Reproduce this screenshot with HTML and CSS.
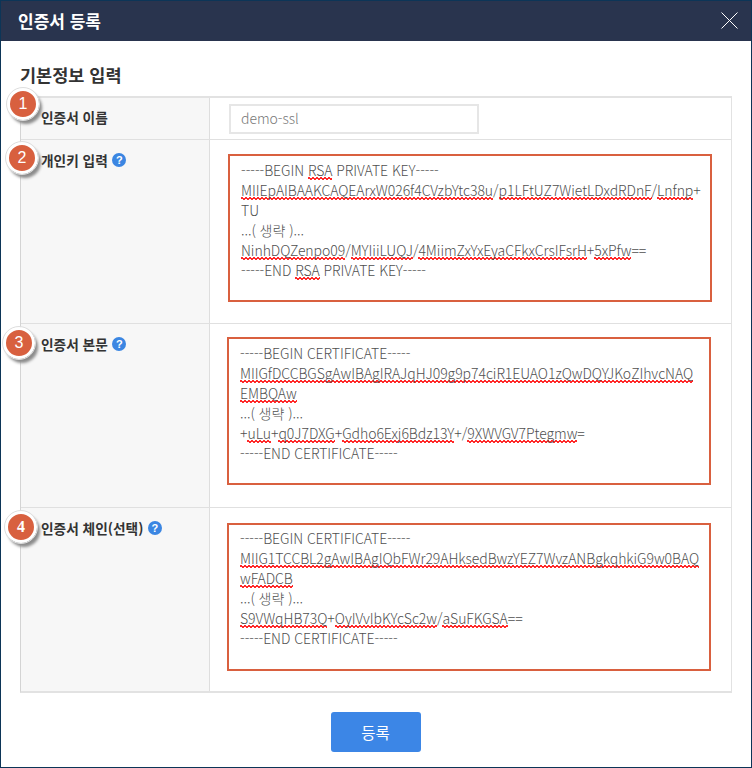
FILE: index.html
```html
<!DOCTYPE html>
<html lang="ko">
<head>
<meta charset="utf-8">
<title>인증서 등록</title>
<link rel="stylesheet" href="styles.css">
</head>
<body>
<div class="window">
  <header class="titlebar">
    <h1 class="title">인증서 등록</h1>
    <svg class="close" width="17" height="17" viewBox="0 0 17 17"><path d="M.5.5l16 16M16.500.5l-16 16" stroke="#fff" stroke-width="1" fill="none"/></svg>
  </header>
  <main class="content">
    <h2 class="section">기본정보 입력</h2>
    <div class="table">
      <div class="row row-name">
        <div class="head"><span class="badge b1">1</span><span class="label label-center">인증서 이름</span></div>
        <div class="cell cell-name"><div class="input">demo-ssl</div></div>
      </div>
      <div class="row">
        <div class="head"><span class="badge b2">2</span><span class="label">개인키 입력</span><span class="help">?</span></div>
        <div class="cell cell-key">
          <div class="area area-key">
            <div>-----BEGIN <u>RSA</u> PRIVATE KEY-----</div>
            <div><u>MIIEpAIBAAKCAQEArxW026f4CVzbYtc38u</u>/<u>p1LFtUZ7WietLDxdRDnF</u>/<u>Lnfnp</u>+</div>
            <div>TU</div>
            <div>...( 생략 )...</div>
            <div><u>NinhDQZenpo09</u>/<u>MYIiiLUQJ</u>/<u>4MiimZxYxEyaCFkxCrsIFsrH</u>+<u>5xPfw</u>==</div>
            <div>-----END <u>RSA</u> PRIVATE KEY-----</div>
          </div>
        </div>
      </div>
      <div class="row">
        <div class="head"><span class="badge b3">3</span><span class="label">인증서 본문</span><span class="help">?</span></div>
        <div class="cell cell-cert">
          <div class="area area-cert">
            <div>-----BEGIN CERTIFICATE-----</div>
            <div><u>MIIGfDCCBGSgAwIBAgIRAJqHJ09g9p74ciR1EUAO1zQwDQYJKoZIhvcNAQ</u></div>
            <div><u>EMBQAw</u></div>
            <div>...( 생략 )...</div>
            <div>+<u>uLu</u>+<u>q0J7DXG</u>+<u>Gdho6Exj6Bdz13Y</u>+/<u>9XWVGV7Ptegmw</u>=</div>
            <div>-----END CERTIFICATE-----</div>
          </div>
        </div>
      </div>
      <div class="row row-last">
        <div class="head"><span class="badge b4">4</span><span class="label">인증서 체인(선택)</span><span class="help">?</span></div>
        <div class="cell cell-chain">
          <div class="area">
            <div>-----BEGIN CERTIFICATE-----</div>
            <div><u>MIIG1TCCBL2gAwIBAgIQbFWr29AHksedBwzYEZ7WvzANBgkqhkiG9w0BAQ</u></div>
            <div><u>wFADCB</u></div>
            <div>...( 생략 )...</div>
            <div><u>S9VWqHB73Q</u>+<u>OyIVvIbKYcSc2w</u>/<u>aSuFKGSA</u>==</div>
            <div>-----END CERTIFICATE-----</div>
          </div>
        </div>
      </div>
    </div>
    <div class="actions"><button class="submit" type="button">등록</button></div>
  </main>
</div>
</body>
</html>
```
FILE: styles.css
```css
* { box-sizing: border-box; }
html, body { margin: 0; padding: 0; }
body {
  width: 752px;
  height: 768px;
  overflow: hidden;
  background: #fff;
  font-family: "Noto Sans CJK KR", "Noto Sans", sans-serif;
}
.window {
  width: 752px;
  height: 768px;
  border: 1px solid #0c3557;
  display: flex;
  flex-direction: column;
  background: #fff;
}
.titlebar {
  height: 40px;
  flex: none;
  background: #29344e;
  display: flex;
  align-items: center;
  justify-content: space-between;
  padding: 0 13px 2px 17px;
}
.title {
  margin: 0;
  font-size: 17px;
  font-weight: 700;
  color: #fff;
}
.close { display: block; margin-top: 1px; }
.content {
  flex: 1;
  padding: 22px 20px 0 19px;
}
.section {
  margin: 0 0 9px;
  height: 24px;
  line-height: 24px;
  font-size: 17.5px;
  font-weight: 700;
  color: #333;
}
.table {
  width: 712px;
  border: 1px solid #e2e2e2;
  border-width: 2px 1px 2px 1px;
  border-left-color: #d4d4d4;
}
.row {
  display: grid;
  grid-template-columns: 189px 1fr;
  height: 184px;
  border-bottom: 1px solid #e0e0e0;
}
.row-name { height: 42px; }
.row-last { border-bottom: 0; height: 183px; }
.head {
  position: relative;
  display: flex;
  align-items: flex-start;
  gap: 4.5px;
  padding: 10px 0 0 20px;
  background: #f7f7f7;
  border-right: 1px solid #dedede;
}
.row-name .head { padding-top: 9px; }
.label {
  font-size: 13.7px;
  line-height: 20px;
  font-weight: 700;
  color: #333;
}
.help {
  width: 14px;
  height: 14px;
  margin-top: 3px;
  border-radius: 50%;
  background: #3b86e2;
  color: #fff;
  font: 700 11px/14px "Liberation Sans", sans-serif;
  text-align: center;
}
.badge {
  position: absolute;
  width: 32px;
  height: 32px;
  border-radius: 50%;
  background: #d8603f;
  border: 3px solid #fff;
  outline: 1px solid #dedede;
  box-shadow: 3px 4px 3px #8b8b8b;
  color: #fff;
  font: 400 16px/26px "Liberation Sans", sans-serif;
  text-align: center;
}
.b1 { left: -14px; top: -10px; }
.b2 { left: -15px; top: 2px; }
.b3 { left: -18px; top: 3px; }
.b4 { left: -16px; top: 3px; font-weight: 700; font-family: "Liberation Serif", serif; }
.cell { padding: 14px 0 0 18px; }
.cell-name { padding: 6px 0 0 19px; }
.cell-cert { padding-left: 17px; padding-top: 13px; }
.cell-chain { padding-left: 17px; padding-top: 15px; }
.input {
  width: 250px;
  height: 30px;
  border: 2px solid #e6e6e6;
  padding: 0 10px;
  font-size: 14px;
  line-height: 24px;
  font-weight: 300;
  color: #777;
  letter-spacing: -0.05px;
}
.area {
  width: 484px;
  height: 148px;
  border: 2px solid #d9603f;
  padding: 3px 10px 0 11px;
  font-size: 14px;
  line-height: 20px;
  font-weight: 300;
  color: #4f4f4f;
  white-space: nowrap;
  letter-spacing: -0.05px;
}
.area-key, .area-cert { padding-top: 4px; }
.area u {
  text-decoration: none;
  background-image:
    linear-gradient(45deg, transparent 30%, #ff2a2a 30%, #ff2a2a 65%, transparent 65%),
    linear-gradient(135deg, transparent 30%, #ff2a2a 30%, #ff2a2a 65%, transparent 65%);
  background-size: 4px 3px;
  background-position: 0 100%, 2px 100%;
  background-repeat: repeat-x;
}
.actions {
  display: flex;
  justify-content: center;
  padding-top: 19px;
}
.submit {
  width: 90px;
  height: 40px;
  border: 0;
  border-radius: 3px;
  background: #3c86e6;
  color: #fff;
  font-family: inherit;
  font-size: 15.5px;
  font-weight: 400;
}
```
